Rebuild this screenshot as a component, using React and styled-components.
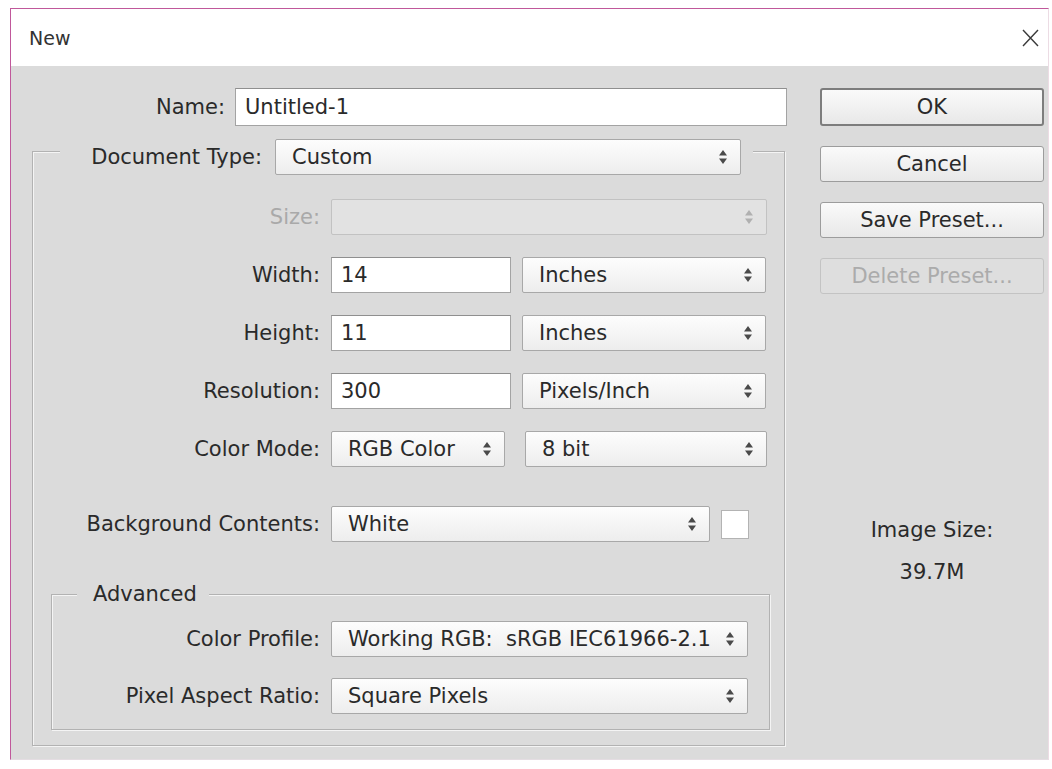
import React from 'react';
import styled, { createGlobalStyle } from 'styled-components';

const GlobalStyle = createGlobalStyle`
  body {
    margin: 0;
    padding: 0;
    background: #fff;
    font-family: 'DejaVu Sans', 'Liberation Sans', sans-serif;
    color: #2a2a2a;
  }
`;

const Dialog = styled.div`
  margin: 8px 0 0 10px;
  width: 1037px;
  border-top: 1px solid #c0589b;
  border-left: 1px solid #c0589b;
  border-right: 1px solid #ecdce4;
  border-bottom: 1px solid #e4dde2;
  background: #dbdbdb;
`;

const TitleBar = styled.div`
  height: 57px;
  display: flex;
  align-items: center;
  justify-content: space-between;
  padding: 0 9px 0 18px;
  background: #fff;
  font-size: 19px;
  color: #333;
`;

const Body = styled.div`
  display: flex;
  padding: 22px 4px 13px 21px;
`;

const LeftPane = styled.div`
  width: 756px;
  display: flex;
  flex-direction: column;
`;

const RightPane = styled.div`
  width: 224px;
  margin-left: 32px;
  display: flex;
  flex-direction: column;
  gap: 20px;
`;

const Row = styled.div`
  display: flex;
  align-items: center;
  gap: ${(p) => p.$gap || 11}px;
`;

const Rows = styled.div`
  display: flex;
  flex-direction: column;
  gap: ${(p) => p.$gap || 22}px;
  padding-top: ${(p) => p.$top || 0}px;
`;

const Label = styled.div`
  width: ${(p) => (p.$width ? `${p.$width}px` : 'auto')};
  text-align: right;
  font-size: 21px;
  white-space: nowrap;
  color: ${(p) => (p.$disabled ? '#a9a9a9' : '#2a2a2a')};
`;

const Input = styled.div`
  box-sizing: border-box;
  width: ${(p) => p.$width}px;
  height: ${(p) => p.$height || 36}px;
  padding-left: 9px;
  display: flex;
  align-items: center;
  background: #fff;
  border: 1px solid #a3a3a3;
  border-top-color: #8f8f8f;
  font-size: 21px;
`;

const SelectBox = styled.div`
  box-sizing: border-box;
  width: ${(p) => p.$width}px;
  height: 36px;
  padding: 0 12px 0 16px;
  display: flex;
  align-items: center;
  justify-content: space-between;
  border: 1px solid ${(p) => (p.$disabled ? '#c2c2c2' : '#a8a8a8')};
  border-radius: 2px;
  background: ${(p) =>
    p.$disabled ? '#e2e2e2' : 'linear-gradient(#fdfdfd, #ededed)'};
  font-size: 21px;
  white-space: pre;
`;

const SelectPair = styled.div`
  display: flex;
  gap: 20px;
`;

const Swatch = styled.div`
  box-sizing: border-box;
  width: 28px;
  height: 29px;
  background: #fff;
  border: 1px solid #b3b3b3;
`;

const Group = styled.div`
  margin: ${(p) => p.$margin};
  padding-bottom: 15px;
  border: 1px solid #b2b2b2;
  box-shadow: inset 1px 1px 0 #f4f4f4, 1px 1px 0 #f4f4f4;
`;

const Legend = styled.div`
  display: flex;
  align-items: center;
  gap: 13px;
  width: fit-content;
  margin: -13px 0 0 ${(p) => p.$left}px;
  padding: 0 12px 0 ${(p) => p.$pad}px;
  background: #dbdbdb;
  font-size: 21px;
`;

const Button = styled.div`
  box-sizing: border-box;
  height: ${(p) => (p.$primary ? 38 : 36)}px;
  display: flex;
  align-items: center;
  justify-content: center;
  border: ${(p) => (p.$primary ? '2px solid #7d7d7d' : '1px solid #9c9c9c')};
  border-radius: 3px;
  background: ${(p) =>
    p.$disabled ? '#dedede' : 'linear-gradient(#fafafa, #e8e8e8)'};
  border-color: ${(p) => (p.$disabled ? '#c3c3c3' : undefined)};
  color: ${(p) => (p.$disabled ? '#ababab' : '#2a2a2a')};
  font-size: 21px;
`;

const SizeInfo = styled.div`
  margin-top: 204px;
  display: flex;
  flex-direction: column;
  align-items: center;
  gap: 18px;
  font-size: 21px;
`;

const CloseIcon = () => (
  <svg width="17" height="18" viewBox="0 0 17 18">
    <path d="M1 1 L16 17 M16 1 L1 17" stroke="#3a3a3a" strokeWidth="1.4" fill="none" />
  </svg>
);

const Arrows = ({ disabled }) => (
  <svg width="10" height="16" viewBox="0 0 10 16">
    <path d="M5 1 L9 6.5 H1 Z M1 9.5 H9 L5 15 Z" fill={disabled ? '#b0b0b0' : '#4a4a4a'} />
  </svg>
);

const Select = ({ width, value, disabled }) => (
  <SelectBox $width={width} $disabled={disabled}>
    <span>{value}</span>
    <Arrows disabled={disabled} />
  </SelectBox>
);

const App = () => {
  return (
    <>
      <GlobalStyle />
      <Dialog>
        <TitleBar>
          <span>New</span>
          <CloseIcon />
        </TitleBar>
        <Body>
          <LeftPane>
            <Row $gap={10}>
              <Label $width={193}>Name:</Label>
              <Input $width={552} $height={38}>Untitled-1</Input>
            </Row>

            <Group $margin="25px 3px 0 0">
              <Legend $left={27} $pad={30}>
                <Label $width={172}>Document Type:</Label>
                <Select width={466} value="Custom" />
              </Legend>

              <Rows $top={24}>
                <Row>
                  <Label $width={287} $disabled>Size:</Label>
                  <Select width={436} value="" disabled />
                </Row>
                <Row>
                  <Label $width={287}>Width:</Label>
                  <Input $width={180}>14</Input>
                  <Select width={244} value="Inches" />
                </Row>
                <Row>
                  <Label $width={287}>Height:</Label>
                  <Input $width={180}>11</Input>
                  <Select width={244} value="Inches" />
                </Row>
                <Row>
                  <Label $width={287}>Resolution:</Label>
                  <Input $width={180}>300</Input>
                  <Select width={244} value="Pixels/Inch" />
                </Row>
                <Row>
                  <Label $width={287}>Color Mode:</Label>
                  <SelectPair>
                    <Select width={174} value="RGB Color" />
                    <Select width={242} value="8 bit" />
                  </SelectPair>
                </Row>
              </Rows>

              <Rows $top={39}>
                <Row>
                  <Label $width={287}>Background Contents:</Label>
                  <Select width={379} value="White" />
                  <Swatch />
                </Row>
              </Rows>

              <Group $margin="52px 14px 0 18px">
                <Legend $left={25} $pad={16}>
                  <span>Advanced</span>
                </Legend>
                <Rows $top={15} $gap={21}>
                  <Row>
                    <Label $width={268}>Color Profile:</Label>
                    <Select width={417} value="Working RGB:  sRGB IEC61966-2.1" />
                  </Row>
                  <Row>
                    <Label $width={268}>Pixel Aspect Ratio:</Label>
                    <Select width={417} value="Square Pixels" />
                  </Row>
                </Rows>
              </Group>
            </Group>
          </LeftPane>

          <RightPane>
            <Button $primary>OK</Button>
            <Button>Cancel</Button>
            <Button>Save Preset...</Button>
            <Button $disabled>Delete Preset...</Button>
            <SizeInfo>
              <span>Image Size:</span>
              <span>39.7M</span>
            </SizeInfo>
          </RightPane>
        </Body>
      </Dialog>
    </>
  );
};

export default App;
